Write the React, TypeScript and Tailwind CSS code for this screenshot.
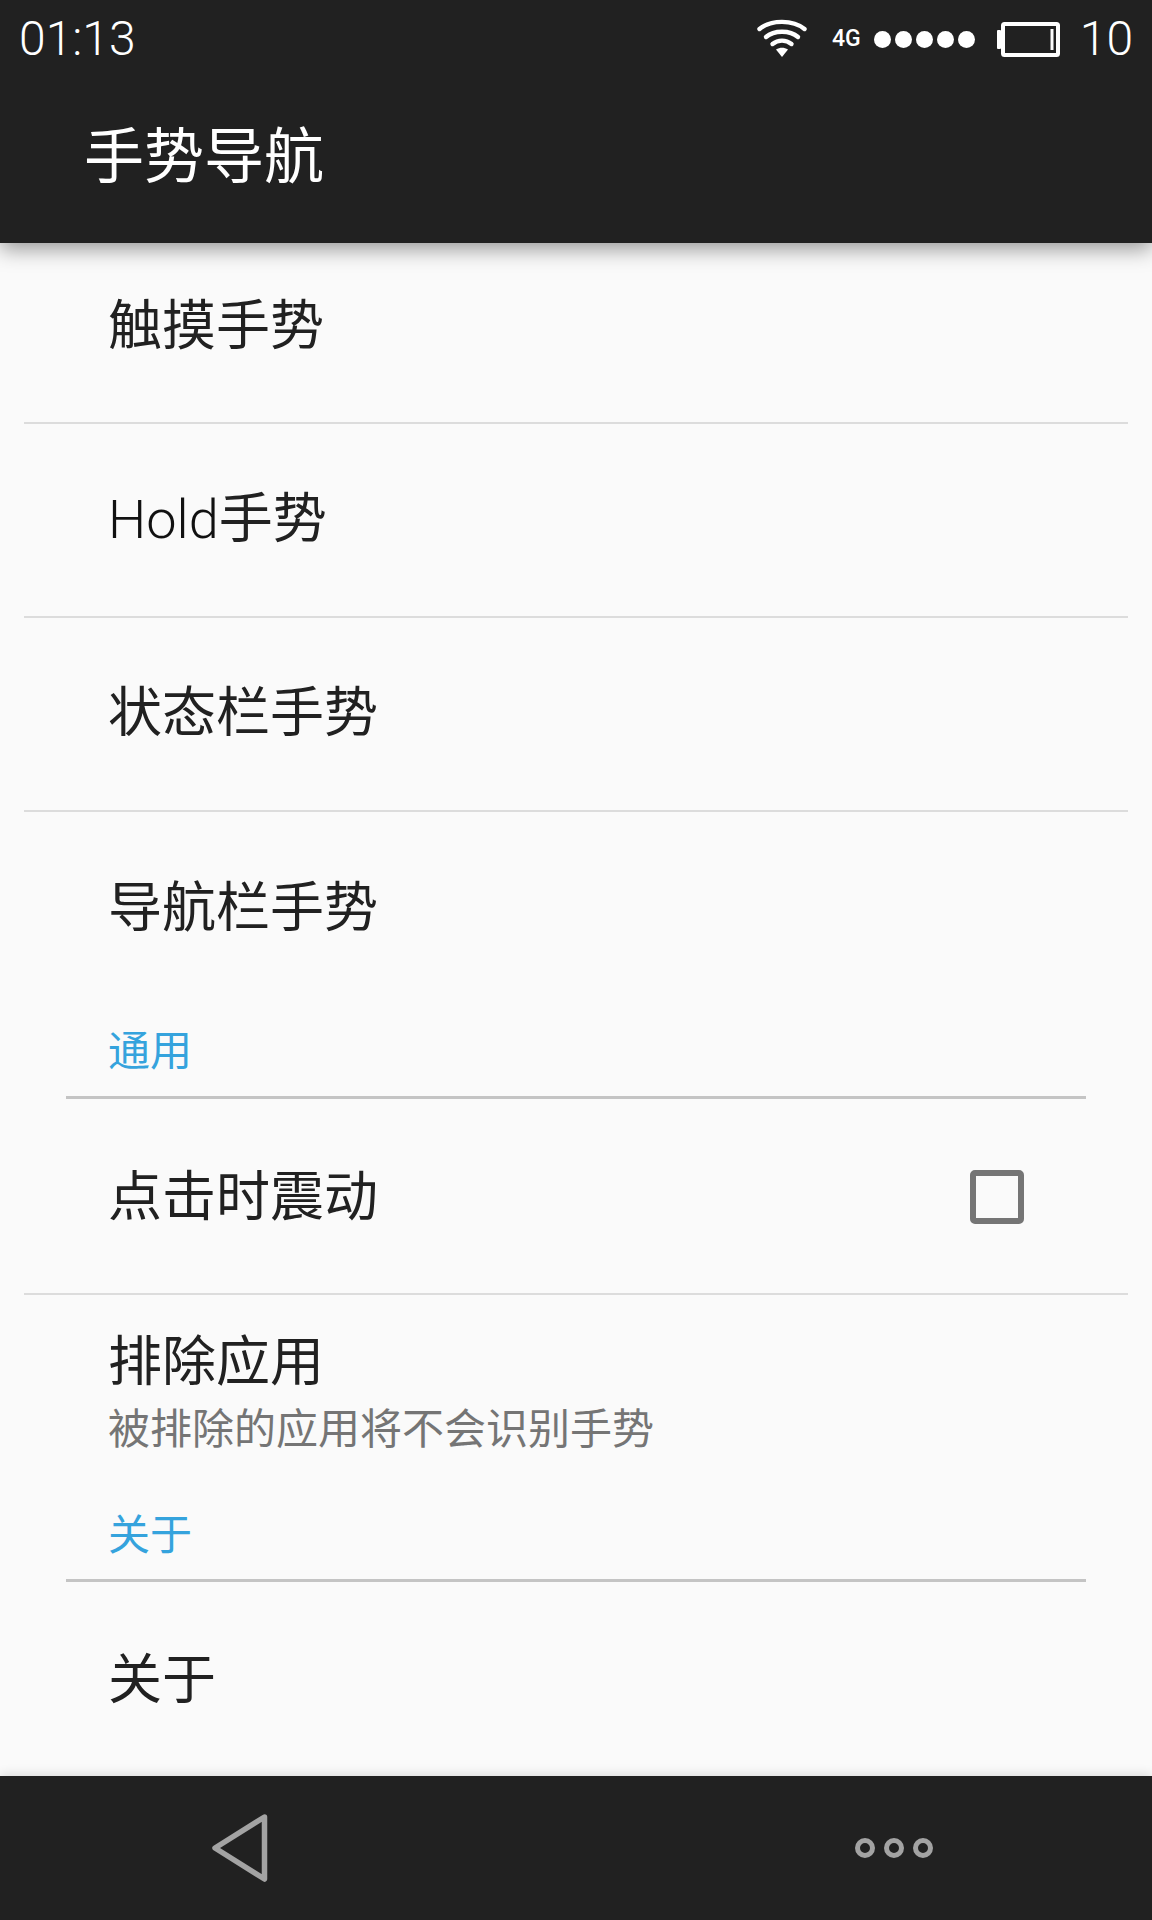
const font = { fontFamily: '"Roboto", "Noto Sans CJK SC", sans-serif' };

function Wifi() {
  return (
    <svg width="50" height="40" viewBox="0 0 50 40">
      <g fill="none" stroke="#fff" strokeWidth="4.4" strokeLinecap="round">
        <path d="M2.5 10 C14 0.5 36 0.5 47.5 10" />
        <path d="M9 18 C17 11 33 11 41 18" />
        <path d="M15.5 25 C21 20.5 29 20.5 34.5 25" />
      </g>
      <path d="M19 30.5 C23 28 27 28 31 30.5 L25 38 Z" fill="#fff" />
    </svg>
  );
}

function Battery() {
  return (
    <svg width="63" height="35" viewBox="0 0 63 35" className="block">
      <rect x="0" y="8" width="4" height="19" rx="1" fill="#fff" />
      <rect x="6" y="2" width="55" height="31" rx="1.5" fill="none" stroke="#fff" strokeWidth="4" />
      <rect x="53.5" y="7" width="3" height="21" fill="#fff" />
    </svg>
  );
}

function Row({ label, h, pad, labelPad, checkbox }: { label: React.ReactNode; h: string; pad?: string; labelPad?: string; checkbox?: boolean }) {
  return (
    <div className={`flex items-center justify-between pl-[108px] ${h} ${pad ?? ""}`}>
      <span className={`text-[54px] leading-[70px] text-[#212121] ${labelPad ?? ""}`}>{label}</span>
      {checkbox && (
        <div className="mr-[128px] h-[54px] w-[54px] rounded-[5px] border-[6px] border-[#757575]" />
      )}
    </div>
  );
}

const Divider = () => <div className="mx-[24px] h-[2px] bg-[#dcdcdc]" />;
const SectionLine = () => <div className="mx-[66px] h-[3px] bg-[#c4c4c4]" />;
const Dot = () => <div className="h-[17px] w-[17px] rounded-full bg-white" />;
const Ring = () => <div className="h-[20px] w-[20px] rounded-full border-[5px] border-[#a3a3a3]" />;

export default function App() {
  return (
    <div style={font} className="relative flex h-[1920px] w-[1152px] flex-col overflow-hidden bg-[#fafafa]">
      <header className="relative z-10 h-[243px] shrink-0 bg-[#212121] shadow-[0_6px_20px_rgba(0,0,0,0.4)]">
        <div className="flex h-[78px] items-center justify-between pl-[19px] pr-[19px] text-white">
          <span className="text-[48px] font-light leading-[78px]">01:13</span>
          <div className="flex items-center">
            <Wifi />
            <span className="ml-[25px] text-[23px] font-medium">4G</span>
            <div className="ml-[13px] flex gap-[4px]">
              <Dot />
              <Dot />
              <Dot />
              <Dot />
              <Dot />
            </div>
            <div className="ml-[22px]"><Battery /></div>
            <span className="ml-[20px] text-[48px] font-light leading-[78px]">10</span>
          </div>
        </div>
        <div className="pl-[84px] pt-[40px] text-[60px] leading-[80px] text-white">手势导航</div>
      </header>

      <main className="flex-1">
        <Row label="触摸手势" h="h-[179px]" pad="pb-[12px]" />
        <Divider />
        <Row label={<><span className="font-light text-[#111111]">Hold</span>手势</>} h="h-[192px]" />
        <Divider />
        <Row label="状态栏手势" h="h-[192px]" />
        <Divider />
        <Row label="导航栏手势" h="h-[190px]" pad="pt-[4px]" />
        <div className="flex h-[94px] items-end pb-[19px] pl-[108px] text-[42px] leading-[50px] text-[#35a3dd]">通用</div>
        <SectionLine />
        <Row label="点击时震动" h="h-[194px]" pad="pt-[2px]" labelPad="pt-[2px]" checkbox />
        <Divider />
        <div className="h-[186px] pl-[108px] pt-[35px]">
          <div className="text-[54px] leading-[66px] text-[#212121]">排除应用</div>
          <div className="mt-[8px] text-[42px] leading-[52px] text-[#757575]">被排除的应用将不会识别手势</div>
        </div>
        <div className="flex h-[98px] items-end pb-[18px] pl-[108px] text-[42px] leading-[50px] text-[#35a3dd]">关于</div>
        <SectionLine />
        <Row label="关于" h="h-[193px]" pad="pt-[4px]" />
      </main>

      <footer className="flex h-[144px] shrink-0 items-center justify-between bg-[#212121] pl-[210px] pr-[219px] shadow-[0_-2px_10px_rgba(0,0,0,0.12)]">
        <svg width="58" height="68" viewBox="0 0 58 68">
          <path d="M54.5 3 L5 34 L54.5 65 Z" fill="none" stroke="#a3a3a3" strokeWidth="5.5" strokeLinejoin="round" />
        </svg>
        <div className="flex gap-[9px]">
          <Ring />
          <Ring />
          <Ring />
        </div>
      </footer>
    </div>
  );
}
